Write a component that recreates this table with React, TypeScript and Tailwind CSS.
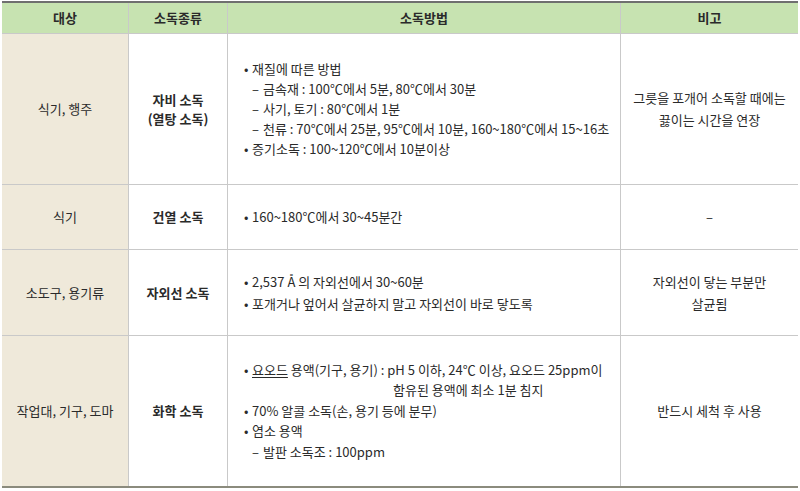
import React from "react";

const font = { fontFamily: '"Noto Sans CJK KR", "Noto Sans", sans-serif' };

function Cell({
  children,
  className = "",
}: {
  children?: React.ReactNode;
  className?: string;
}) {
  return (
    <div className={`flex items-center border-r border-b border-[#c9c9c9] ${className}`}>
      {children}
    </div>
  );
}

function Bullet({ children }: { children: React.ReactNode }) {
  return (
    <div className="flex whitespace-nowrap">
      <span className="w-[8px]">•</span>
      <span>{children}</span>
    </div>
  );
}

function Dash({ children }: { children: React.ReactNode }) {
  return (
    <div className="flex whitespace-nowrap pl-[8px]">
      <span className="w-[11px]">–</span>
      <span>{children}</span>
    </div>
  );
}

export default function App() {
  const row = "grid grid-cols-[127px_99px_393px_177px]";
  const c1 = "justify-center bg-[#efe9da] text-center";
  const c2 = "justify-center text-center font-bold";
  const c3 = "pl-[16px] text-left";
  const c4 = "justify-center text-center border-r-0";
  return (
    <div className="w-[800px] h-[491px] bg-white text-[13px] leading-[20px] text-[#2a2a2a]" style={font}>
      <div className="ml-[2px] pt-[1px] w-[796px]">
        <div className="border-t-2 border-[#6f6f6f] border-b-2 border-b-[#8b8b7d]">
          <div className={`${row} h-[31px] bg-[#c7e3b1] font-bold`}>
            <Cell className="justify-center">대상</Cell>
            <Cell className="justify-center">소독종류</Cell>
            <Cell className="justify-center">소독방법</Cell>
            <Cell className="justify-center border-r-0">비고</Cell>
          </div>
          <div className={`${row} h-[151px]`}>
            <Cell className={c1}>식기, 행주</Cell>
            <Cell className={c2}>
              <div className="leading-[19px]">
                자비 소독
                <br />
                (열탕 소독)
              </div>
            </Cell>
            <Cell className={c3}>
              <div>
                <Bullet>재질에 따른 방법</Bullet>
                <Dash>금속재 : 100℃에서 5분, 80℃에서 30분</Dash>
                <Dash>사기, 토기 : 80℃에서 1분</Dash>
                <Dash>천류 : 70℃에서 25분, 95℃에서 10분, 160~180℃에서 15~16초</Dash>
                <Bullet>증기소독 : 100~120℃에서 10분이상</Bullet>
              </div>
            </Cell>
            <Cell className={c4}>
              <div className="leading-[22px]">
                그릇을 포개어 소독할 때에는
                <br />
                끓이는 시간을 연장
              </div>
            </Cell>
          </div>
          <div className={`${row} h-[65px]`}>
            <Cell className={c1}>식기</Cell>
            <Cell className={c2}>건열 소독</Cell>
            <Cell className={c3}>
              <Bullet>160~180℃에서 30~45분간</Bullet>
            </Cell>
            <Cell className={c4}>–</Cell>
          </div>
          <div className={`${row} h-[86px]`}>
            <Cell className={c1}>소도구, 용기류</Cell>
            <Cell className={c2}>자외선 소독</Cell>
            <Cell className={c3}>
              <div className="leading-[22px]">
                <Bullet>2,537 Å 의 자외선에서 30~60분</Bullet>
                <Bullet>포개거나 엎어서 살균하지 말고 자외선이 바로 닿도록</Bullet>
              </div>
            </Cell>
            <Cell className={c4}>
              <div className="leading-[22px]">
                자외선이 닿는 부분만
                <br />
                살균됨
              </div>
            </Cell>
          </div>
          <div className={`${row} h-[150px]`}>
            <Cell className={`${c1} border-b-0`}>작업대, 기구, 도마</Cell>
            <Cell className={`${c2} border-b-0`}>화학 소독</Cell>
            <Cell className={`${c3} border-b-0`}>
              <div className="leading-[20.5px]">
                <Bullet>
                  <span className="underline underline-offset-2">요오드</span> 용액(기구, 용기) : pH 5 이하, 24℃ 이상, 요오드 25ppm이
                </Bullet>
                <div className="whitespace-nowrap pl-[149px]">함유된 용액에 최소 1분 침지</div>
                <Bullet>70% 알콜 소독(손, 용기 등에 분무)</Bullet>
                <Bullet>염소 용액</Bullet>
                <Dash>발판 소독조 : 100ppm</Dash>
              </div>
            </Cell>
            <Cell className={`${c4} border-b-0`}>반드시 세척 후 사용</Cell>
          </div>
        </div>
      </div>
    </div>
  );
}
